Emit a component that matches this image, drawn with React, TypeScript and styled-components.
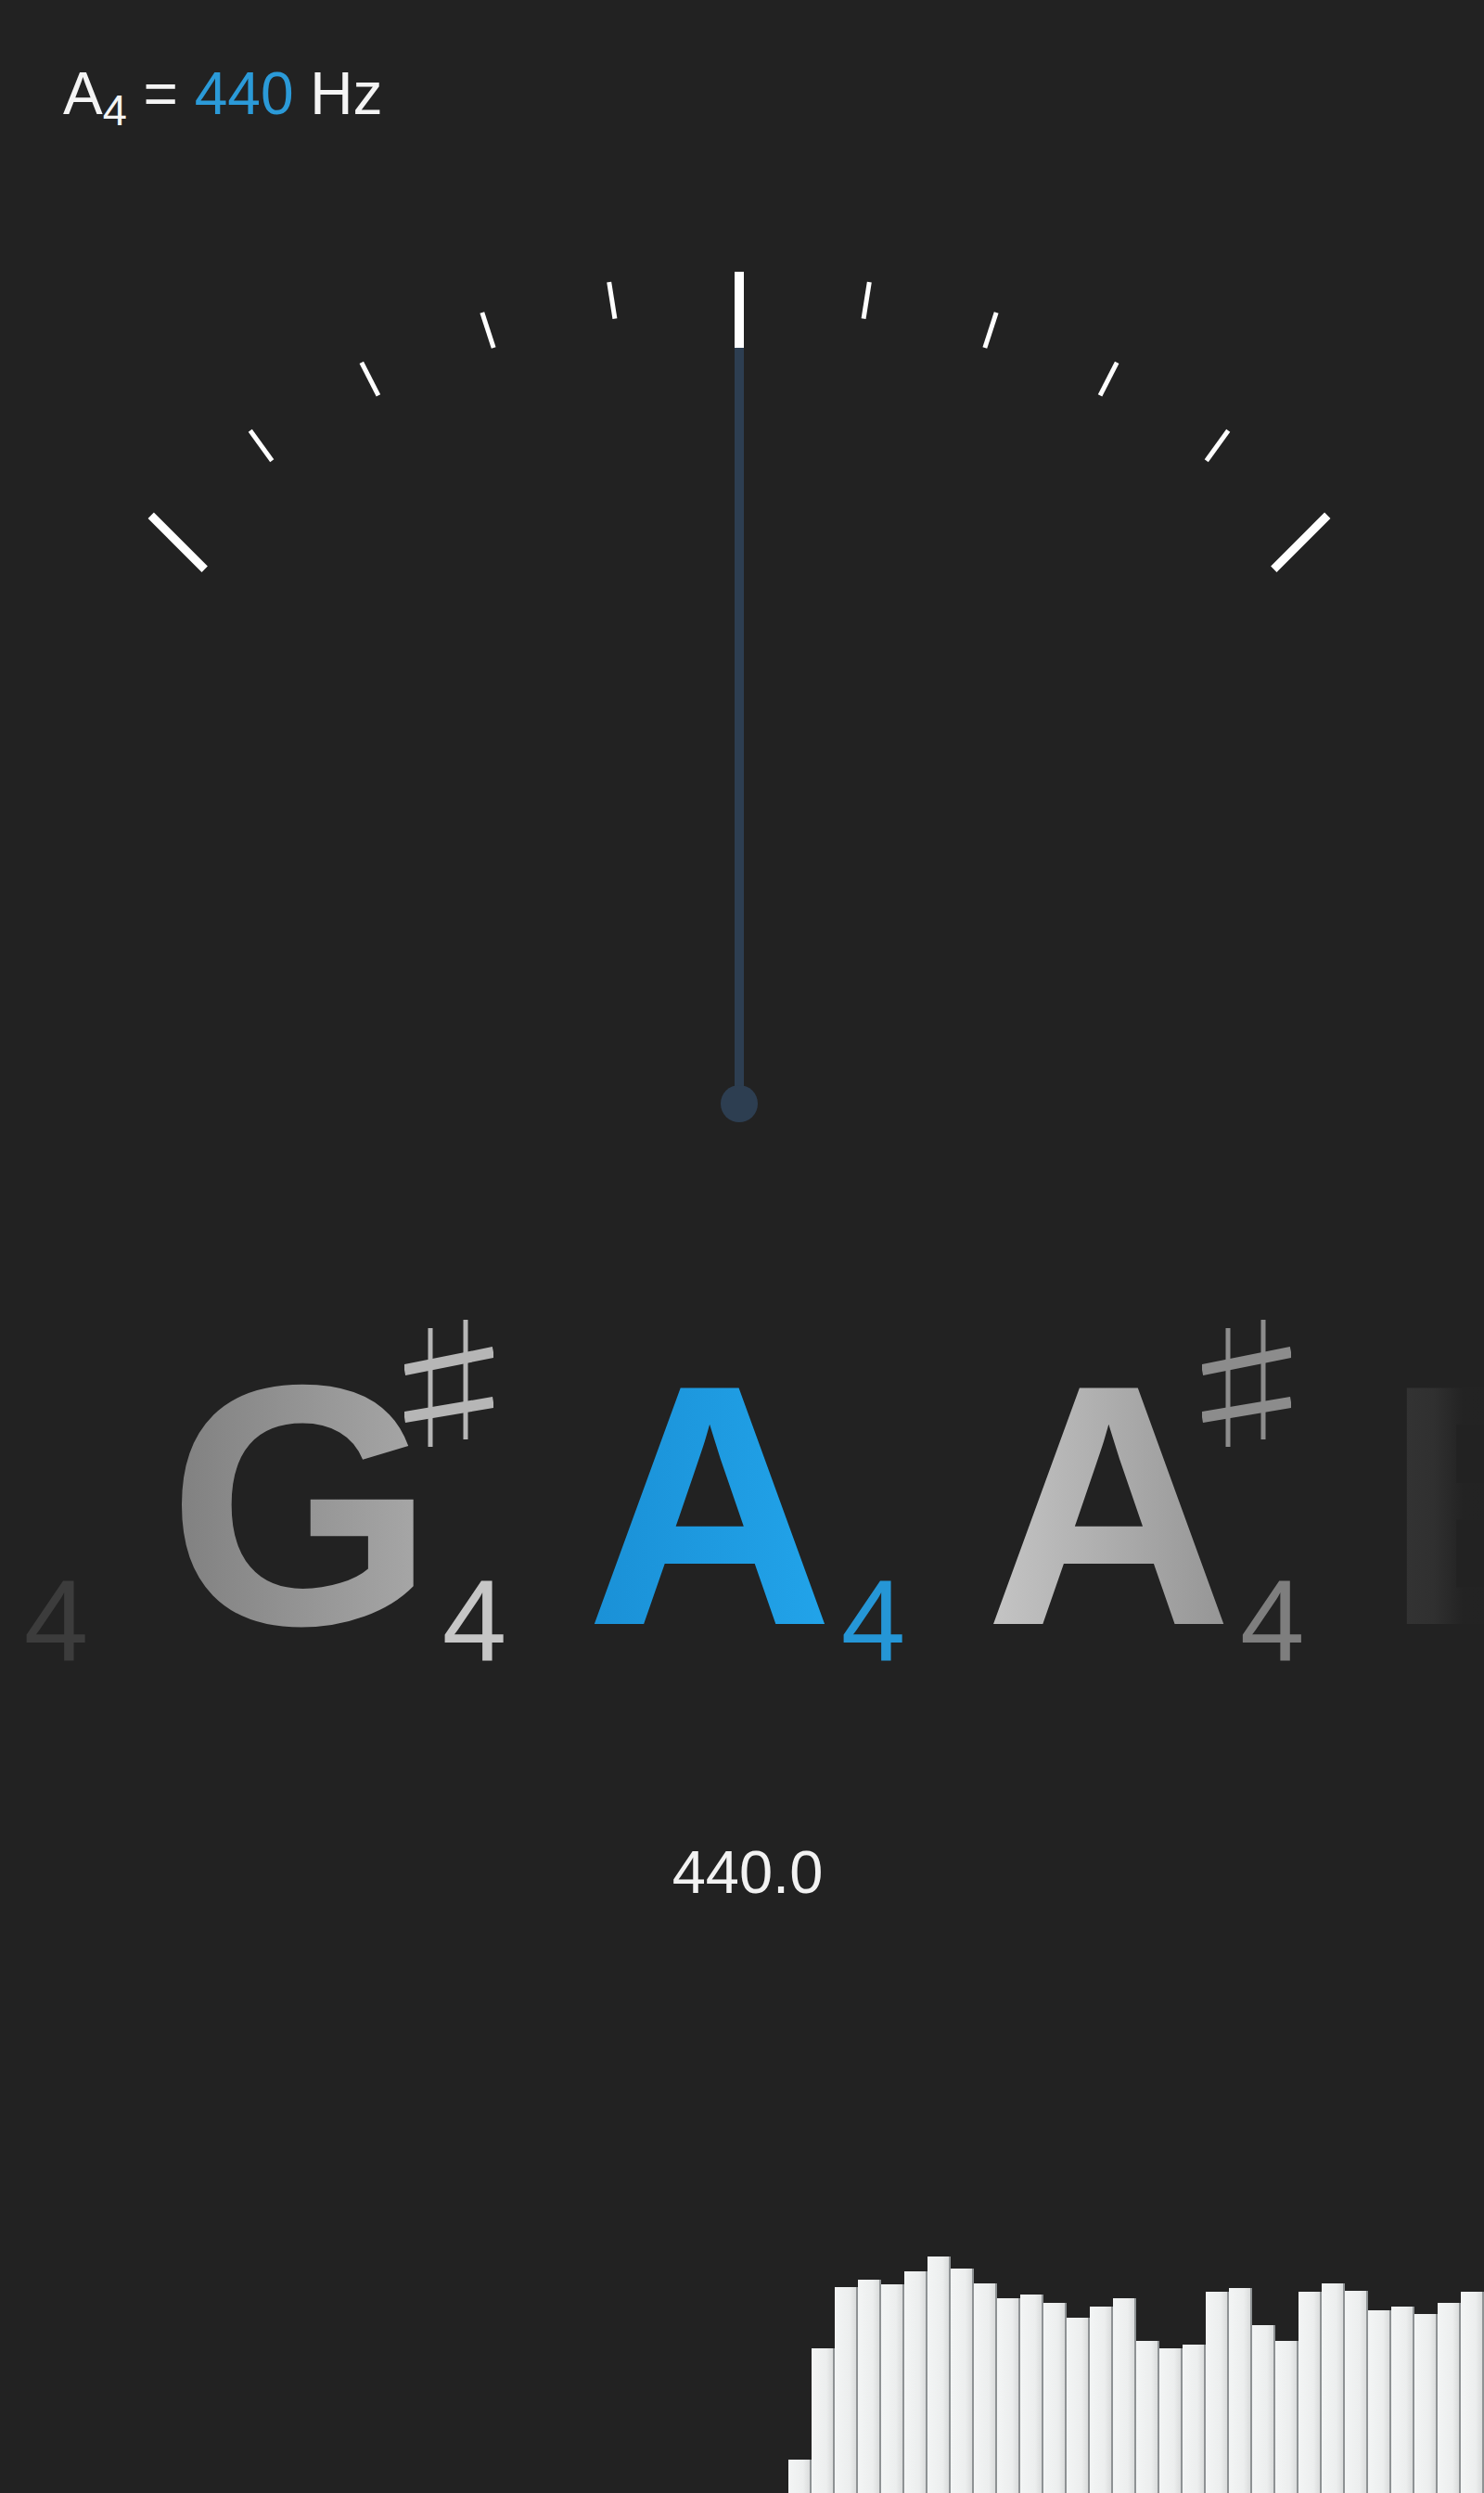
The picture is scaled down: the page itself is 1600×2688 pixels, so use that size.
import React from "react";
import styled, { createGlobalStyle } from "styled-components";

const Global = createGlobalStyle`
  html, body { margin: 0; padding: 0; background: #222222; }
  * { box-sizing: border-box; }
`;

const Screen = styled.div`
  width: 1600px;
  height: 2688px;
  background: #222222;
  display: flex;
  flex-direction: column;
  overflow: hidden;
  font-family: "Liberation Sans", Arial, sans-serif;
  color: #f4f4f4;
`;

const Header = styled.div`
  margin-top: 69px;
  padding-left: 68px;
  height: 64px;
  font-size: 64px;
  line-height: 64px;
  white-space: pre;
`;

const Sub = styled.span`
  font-size: 47px;
  vertical-align: -12px;
`;

const Blue = styled.span`
  color: #2b9ad8;
`;

const Gauge = styled.svg`
  display: block;
  width: 1600px;
  height: 1304px;
  flex: none;
`;

const NotesRow = styled.div`
  display: flex;
  gap: 85px;
  margin-left: -270px;
  height: 372px;
  flex: none;
`;

const Note = styled.div`
  display: flex;
  flex: none;
`;

const Letter = styled.span<{ $fill: string }>`
  font-size: 370px;
  line-height: 372px;
  height: 372px;
  font-weight: 700;
  background: ${(p) => p.$fill};
  -webkit-background-clip: text;
  background-clip: text;
  color: transparent;
`;

const Mods = styled.div`
  display: flex;
  flex-direction: column;
  justify-content: flex-end;
  margin-left: 8px;
  width: 70px;
`;

const SharpIcon = styled.svg`
  display: block;
  width: 96px;
  height: 137px;
  margin-left: -41px;
  margin-top: -14px;
  margin-bottom: auto;
`;

const Octave = styled.span<{ $color: string }>`
  font-size: 125px;
  line-height: 125px;
  font-weight: 400;
  color: ${(p) => p.$color};
`;

const Frequency = styled.div`
  margin-top: 178px;
  padding-left: 12px;
  text-align: center;
  font-size: 65px;
  line-height: 64px;
  color: #f2f2f2;
`;

const Spectrum = styled.div`
  margin-top: auto;
  height: 255px;
  display: flex;
  align-items: flex-end;
  justify-content: flex-end;
  flex: none;
`;

const Bar = styled.div<{ $h: number }>`
  width: 25px;
  height: ${(p) => p.$h}px;
  background: linear-gradient(90deg, #f3f5f5 0%, #eceeee 70%, #dadcdc 100%);
  border-right: 2px solid #8e9294;
  flex: none;
`;

const Sharp = ({ color }: { color: string }) => (
  <SharpIcon viewBox="0 0 96 137">
    <line x1="28" y1="9" x2="28" y2="137" stroke={color} strokeWidth="5" />
    <line x1="66" y1="0" x2="66" y2="129" stroke={color} strokeWidth="5" />
    <line x1="0" y1="54" x2="96" y2="35" stroke={color} strokeWidth="12" />
    <line x1="0" y1="105" x2="96" y2="89" stroke={color} strokeWidth="12" />
  </SharpIcon>
);

type NoteData = {
  name: string;
  sharp: boolean;
  fill: string;
  sharpColor: string;
  octColor: string;
};

const notes: NoteData[] = [
  { name: "G", sharp: false, fill: "linear-gradient(90deg, #222222, #2a2a2a)", sharpColor: "#3a3a3a", octColor: "#3c3c3c" },
  { name: "G", sharp: true, fill: "linear-gradient(90deg, #7f7f7f, #a9a9a9)", sharpColor: "#b6b6b6", octColor: "#c6c6c6" },
  { name: "A", sharp: false, fill: "linear-gradient(90deg, #1a90d6, #22a4ea)", sharpColor: "#2596d6", octColor: "#2596d6" },
  { name: "A", sharp: true, fill: "linear-gradient(90deg, #c6c6c6, #949494)", sharpColor: "#8c8c8c", octColor: "#7e7e7e" },
  { name: "B", sharp: false, fill: "linear-gradient(90deg, #353535 0%, #303030 20%, #232323 32%, #222222 100%)", sharpColor: "#333333", octColor: "#333333" },
];

const bars = [36, 156, 222, 230, 225, 239, 255, 242, 226, 210, 214, 205, 189, 201, 210, 164, 156, 160, 217, 221, 181, 164, 217, 226, 218, 197, 201, 193, 205, 217];

const CX = 797;
const CY = 1057;
const R = 897;

const ticks = Array.from({ length: 11 }, (_, i) => -45 + i * 9);

export default function App() {
  return (
    <Screen>
      <Global />
      <Header>
        A<Sub>4</Sub> = <Blue>440</Blue> Hz
      </Header>
      <Gauge viewBox="0 0 1600 1304">
        {ticks.map((deg) => {
          const big = deg === 0 || Math.abs(deg) === 45;
          const len = big ? 82 : 40;
          const a = (deg * Math.PI) / 180;
          const x1 = CX + R * Math.sin(a);
          const y1 = CY - R * Math.cos(a);
          const x2 = CX + (R - len) * Math.sin(a);
          const y2 = CY - (R - len) * Math.cos(a);
          if (deg === 0) return null;
          return (
            <line key={deg} x1={x1} y1={y1} x2={x2} y2={y2} stroke="#ffffff" strokeWidth={big ? 9 : 5} />
          );
        })}
        <line x1={CX} y1={CY - R + 82} x2={CX} y2={CY} stroke="#2d3e51" strokeWidth="10" />
        <line x1={CX} y1={CY - R} x2={CX} y2={CY - R + 82} stroke="#ffffff" strokeWidth="10" />
        <circle cx={CX} cy={CY} r="20" fill="#2d3e51" />
      </Gauge>
      <NotesRow>
        {notes.map((n, i) => (
          <Note key={i}>
            <Letter $fill={n.fill}>{n.name}</Letter>
            <Mods>
              {n.sharp && <Sharp color={n.sharpColor} />}
              <Octave $color={n.octColor}>4</Octave>
            </Mods>
          </Note>
        ))}
      </NotesRow>
      <Frequency>440.0</Frequency>
      <Spectrum>
        {bars.map((h, i) => (
          <Bar key={i} $h={h} />
        ))}
      </Spectrum>
    </Screen>
  );
}
